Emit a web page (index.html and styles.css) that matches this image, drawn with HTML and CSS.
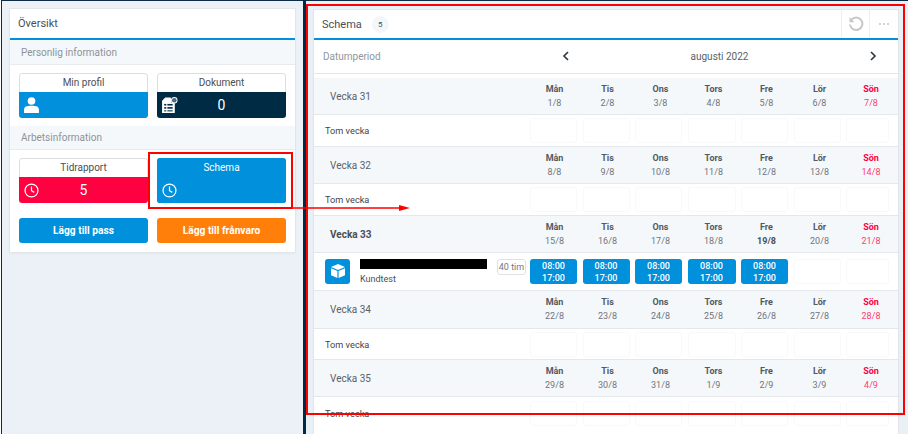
FILE: index.html
```html
<!DOCTYPE html>
<html lang="sv">
<head>
<meta charset="utf-8">
<title>Schema</title>
<link rel="stylesheet" href="styles.css">
</head>
<body>
<div class="app">
  <aside class="side">
    <section class="card overview">
      <header class="card-head"><h1>Översikt</h1></header>
      <h2 class="sec sec-first">Personlig information</h2>
      <div class="tiles">
        <div class="tile">
          <div class="tile-title">Min profil</div>
          <div class="tile-body blue">
            <svg class="ti" viewBox="0 0 16 16"><circle cx="8" cy="4.200" r="3.600" fill="#fff"/><path d="M1 15.500v-3C1 9.600 3.400 8.800 8 8.800s7 .8 7 3.700v3z" fill="#fff"/></svg>
          </div>
        </div>
        <div class="tile">
          <div class="tile-title">Dokument</div>
          <div class="tile-body navy">
            <svg class="ti" viewBox="0 0 16 16"><path d="M4 1h5l1 2v3h3v9.500H1V4z" fill="#fff"/><g fill="#002b45"><rect x="3" y="7" width="2" height="1.500"/><rect x="6" y="7" width="5" height="1.500"/><rect x="3" y="10" width="2" height="1.500"/><rect x="6" y="10" width="5" height="1.500"/><rect x="3" y="13" width="2" height="1"/><rect x="6" y="13" width="5" height="1"/></g><circle cx="12.500" cy="3.500" r="3" fill="#fff"/><circle cx="12.500" cy="3.500" r="2.200" fill="#4d6b80"/></svg>
            <span class="num">0</span>
          </div>
        </div>
      </div>
      <h2 class="sec">Arbetsinformation</h2>
      <div class="tiles">
        <div class="tile">
          <div class="tile-title">Tidrapport</div>
          <div class="tile-body red">
            <svg class="ti clock" viewBox="0 0 16 16"><circle cx="8" cy="8" r="6.900" fill="none" stroke="#fff" stroke-width="1.300"/><path d="M8 3.800v4.400l3 1.800" fill="none" stroke="#fff" stroke-width="1.300"/></svg>
            <span class="num">5</span>
          </div>
        </div>
        <div class="tile tile-solid">
          <div class="tile-title">Schema</div>
          <div class="tile-body blue">
            <svg class="ti clock" viewBox="0 0 16 16"><circle cx="8" cy="8" r="6.900" fill="none" stroke="#fff" stroke-width="1.300"/><path d="M8 3.800v4.400l3 1.800" fill="none" stroke="#fff" stroke-width="1.300"/></svg>
          </div>
        </div>
      </div>
      <div class="actions">
        <button class="btn btn-blue">Lägg till pass</button>
        <button class="btn btn-orange">Lägg till frånvaro</button>
      </div>
    </section>
  </aside>
  <div class="rule"></div>
  <main class="pane">
    <section class="card schedule">
      <header class="card-head sched-head">
        <h1>Schema</h1>
        <span class="count">5</span>
        <div class="head-tools">
          <span class="tool"><svg width="16" height="16" viewBox="0 0 16 16"><path d="M3.300 3.900A6.200 6.200 0 1 1 2 8.500" fill="none" stroke="#c8c8c8" stroke-width="2"/><path d="M1.500 1.200v5h5z" fill="#c8c8c8"/></svg></span>
          <span class="tool tool-dots"><i></i><i></i><i></i></span>
        </div>
      </header>
      <div class="period">
        <span class="period-label">Datumperiod</span>
        <svg class="chev" width="8" height="10" viewBox="0 0 8 10"><path d="M6 1 2 5l4 4" fill="none" stroke="#2f3a45" stroke-width="1.700"/></svg>
        <span class="month">augusti 2022</span>
        <svg class="chev" width="8" height="10" viewBox="0 0 8 10"><path d="M2 1l4 4-4 4" fill="none" stroke="#2f3a45" stroke-width="1.700"/></svg>
      </div>

      <div class="week first">
        <div class="wk">Vecka 31</div>
        <div class="d"><b>Mån</b><span>1/8</span></div><div class="d"><b>Tis</b><span>2/8</span></div><div class="d"><b>Ons</b><span>3/8</span></div><div class="d"><b>Tors</b><span>4/8</span></div><div class="d"><b>Fre</b><span>5/8</span></div><div class="d"><b>Lör</b><span>6/8</span></div><div class="d sun"><b>Sön</b><span>7/8</span></div>
      </div>
      <div class="row">
        <div class="empty-label">Tom vecka</div>
        <div class="cells"><i></i><i></i><i></i><i></i><i></i><i></i><i></i></div>
      </div>

      <div class="week">
        <div class="wk">Vecka 32</div>
        <div class="d"><b>Mån</b><span>8/8</span></div><div class="d"><b>Tis</b><span>9/8</span></div><div class="d"><b>Ons</b><span>10/8</span></div><div class="d"><b>Tors</b><span>11/8</span></div><div class="d"><b>Fre</b><span>12/8</span></div><div class="d"><b>Lör</b><span>13/8</span></div><div class="d sun"><b>Sön</b><span>14/8</span></div>
      </div>
      <div class="row">
        <div class="empty-label">Tom vecka</div>
        <div class="cells"><i></i><i></i><i></i><i></i><i></i><i></i><i></i></div>
      </div>

      <div class="week current">
        <div class="wk">Vecka 33</div>
        <div class="d"><b>Mån</b><span>15/8</span></div><div class="d"><b>Tis</b><span>16/8</span></div><div class="d"><b>Ons</b><span>17/8</span></div><div class="d"><b>Tors</b><span>18/8</span></div><div class="d today"><b>Fre</b><span>19/8</span></div><div class="d"><b>Lör</b><span>20/8</span></div><div class="d sun"><b>Sön</b><span>21/8</span></div>
      </div>
      <div class="row row-shift">
        <div class="person">
          <span class="box"><svg width="16" height="16" viewBox="0 0 16 16"><path d="M8 1 15 4 8 7 1 4z" fill="#fff"/><path d="M1 5.300 7.400 8v7L1 12.200zM15 5.300 8.600 8v7l6.400-2.800z" fill="#fff"/></svg></span>
          <div class="who"><div class="redact"></div><div class="cust">Kundtest</div></div>
          <span class="hours">40 tim</span>
        </div>
        <div class="cells">
          <i class="shift">08:00<br>17:00</i><i class="shift">08:00<br>17:00</i><i class="shift">08:00<br>17:00</i><i class="shift">08:00<br>17:00</i><i class="shift">08:00<br>17:00</i><i></i><i></i>
        </div>
      </div>

      <div class="week week-tall">
        <div class="wk">Vecka 34</div>
        <div class="d"><b>Mån</b><span>22/8</span></div><div class="d"><b>Tis</b><span>23/8</span></div><div class="d"><b>Ons</b><span>24/8</span></div><div class="d"><b>Tors</b><span>25/8</span></div><div class="d"><b>Fre</b><span>26/8</span></div><div class="d"><b>Lör</b><span>27/8</span></div><div class="d sun"><b>Sön</b><span>28/8</span></div>
      </div>
      <div class="row row-short">
        <div class="empty-label">Tom vecka</div>
        <div class="cells"><i></i><i></i><i></i><i></i><i></i><i></i><i></i></div>
      </div>

      <div class="week">
        <div class="wk">Vecka 35</div>
        <div class="d"><b>Mån</b><span>29/8</span></div><div class="d"><b>Tis</b><span>30/8</span></div><div class="d"><b>Ons</b><span>31/8</span></div><div class="d"><b>Tors</b><span>1/9</span></div><div class="d"><b>Fre</b><span>2/9</span></div><div class="d"><b>Lör</b><span>3/9</span></div><div class="d sun"><b>Sön</b><span>4/9</span></div>
      </div>
      <div class="row row-last">
        <div class="empty-label">Tom vecka</div>
        <div class="cells"><i></i><i></i><i></i><i></i><i></i><i></i><i></i></div>
      </div>
    </section>
  </main>
</div>

<div class="mark mark-small"></div>
<div class="mark mark-big"></div>
<svg class="arrow" width="120" height="8" viewBox="0 0 120 8"><path d="M0 4h108" stroke="#f00" stroke-width="1.600"/><path d="M107 1l11 3-11 3z" fill="#f00"/></svg>
</body>
</html>
```

FILE: styles.css
```css
* { box-sizing: border-box; }
html, body { margin: 0; padding: 0; height: 100%; }
body {
  width: 908px;
  height: 434px;
  overflow: hidden;
  position: relative;
  background: #fff;
  font-family: Roboto, "Liberation Sans", sans-serif;
  color: #4a4f55;
}
.app { display: flex; height: 434px; }
h1, h2 { margin: 0; font-weight: 400; }

.side {
  flex: 0 0 302px;
  margin-left: 1px;
  padding: 8px 0 0 8px;
  background: #ebf1f7;
  border-left: 1px solid #0b2c44;
  border-top: 1px solid #0b2c44;
}
.rule { flex: 0 0 3px; background: #002b45; }
.pane {
  flex: 0 0 602px;
  padding: 9px 0 0 8px;
  background: #e9f0f6;
  border-top: 1px solid #0b2c44;
}

.card {
  background: #fff;
  box-shadow: 0 0 0 1px #e2e6ea, 0 1px 2px #d5dde5;
}
.overview { height: 243px; width: 285px; }
.card-head {
  height: 31px;
  border-bottom: 2px solid #0090dc;
  padding-left: 8px;
  display: flex;
  align-items: center;
}
.card-head h1 { font-size: 11px; color: #4a4f55; }

.sec {
  height: 24px;
  padding-left: 11px;
  background: #f5f8fb;
  border-bottom: 1px solid #e8ecef;
  color: #8d9399;
  font-size: 10px;
  line-height: 23px;
}
.sec-first { height: 25px; line-height: 25px; }
.tiles {
  display: grid;
  grid-template-columns: 129px 129px;
  column-gap: 9px;
  padding: 8px 0 8px 9px;
}
.tile {
  height: 45px;
  border-radius: 3px;
  overflow: hidden;
  display: flex;
  flex-direction: column;
}
.tile-title {
  flex: 0 0 19px;
  border: 1px solid #dcdfe2;
  border-bottom: 0;
  border-radius: 3px 3px 0 0;
  text-align: center;
  font-size: 10px;
  line-height: 18px;
  color: #4a4f55;
}
.tile-body {
  flex: 1;
  position: relative;
  display: flex;
  align-items: center;
  justify-content: center;
  color: #fff;
}
.blue { background: #0090dc; }
.navy { background: #002b45; }
.red { background: #ff0040; }
.ti { position: absolute; left: 4px; top: 4px; width: 17px; height: 18px; }
.ti.clock { left: 5px; top: 6px; width: 15px; height: 15px; }
.num { font-size: 14px; font-weight: 400; }
.tile-solid { background: #0090dc; }
.tile-solid .tile-title { background: #0090dc; border: 0; color: #fff; line-height: 19px; }

.actions {
  display: grid;
  grid-template-columns: 129px 129px;
  column-gap: 9px;
  padding: 7px 0 0 9px;
}
.btn {
  height: 25px;
  border: 0;
  border-radius: 3px;
  color: #fff;
  font-family: inherit;
  font-size: 10.200px;
  font-weight: 700;
  padding: 0;
}
.btn-blue { background: #0090dc; }
.btn-orange { background: #ff7f0a; }

.schedule { width: 584px; height: 425px; overflow: hidden; }
.sched-head { height: 30px; padding-left: 8px; }
.count {
  flex: none;
  width: 17px;
  height: 17px;
  margin-left: 10px;
  border-radius: 50%;
  background: #f3f7fb;
  font-size: 8px;
  line-height: 17px;
  text-align: center;
  color: #4a4f55;
}
.head-tools { margin-left: auto; display: flex; height: 28px; }
.tool {
  width: 28px;
  border-left: 1px solid #eceef0;
  display: flex;
  align-items: center;
  justify-content: center;
  gap: 1.500px;
}
.tool-dots { width: 29px; }
.tool-dots i { width: 2.500px; height: 2.500px; border-radius: 50%; background: #c4c4c4; }

.period {
  height: 34px;
  padding-bottom: 1px;
  border-bottom: 1px solid #e4e6e8;
  display: grid;
  grid-template-columns: 239px 8px 299px 8px;
  align-items: center;
  padding-left: 9px;
  font-size: 10px;
}
.period-label { color: #90969c; }
.month { text-align: center; color: #5a5f64; }

.week {
  height: 37px;
  border-bottom: 1px solid #e4e8ec;
  background: #f5f8fb;
  display: grid;
  grid-template-columns: 214px repeat(6, 53px) 50px;
  align-items: center;
}
.week.first { height: 41px; border-top: 4px solid #fff; }
.week-tall { height: 38px; }
.wk { padding-left: 16px; font-size: 10px; color: #5b6066; }
.current .wk { font-weight: 700; color: #4a4f55; }
.d {
  display: flex;
  flex-direction: column;
  align-items: center;
  gap: 3px;
  font-size: 9px;
  line-height: 11px;
  color: #6f757b;
}
.d b { font-weight: 700; color: #54595f; }
.today span { font-weight: 700; color: #4a4f55; }
.sun b { color: #ff0040; }
.sun span { color: #ff3d6e; }

.row {
  height: 32px;
  display: flex;
  align-items: center;
  justify-content: space-between;
  border-bottom: 1px solid #e4e8ec;
}
.row-shift { height: 38px; }
.row-short { height: 31px; }
.row-last { border-bottom: 0; }
.empty-label { padding-left: 11px; font-size: 9.200px; color: #3f444a; }
.cells {
  display: grid;
  grid-template-columns: 47px 47px 47px 48px 47px 47px 43px;
  column-gap: 5.500px;
  width: 361px;
  margin-right: 7px;
}
.cells i {
  display: block;
  height: 25px;
  border: 1px solid #f8f9fa;
  border-radius: 3px;
}
.cells .shift {
  border: 0;
  background: #0090dc;
  color: #fff;
  font-style: normal;
  font-size: 9px;
  font-weight: 500;
  line-height: 12px;
  text-align: center;
  padding-top: .500px;
}
.person { display: flex; align-items: flex-start; padding-left: 11px; }
.box {
  width: 25px;
  height: 25px;
  border-radius: 3px;
  background: #0090dc;
  display: flex;
  align-items: center;
  justify-content: center;
}
.who { width: 137px; margin-left: 10px; }
.redact { width: 127px; height: 10px; background: #000; }
.cust { margin-top: 4px; font-size: 9px; line-height: 12px; color: #4a4f55; }
.hours {
  flex: none;
  width: 29px;
  height: 16px;
  border: 1px solid #dfe2e5;
  border-radius: 3px;
  font-size: 9px;
  line-height: 14px;
  text-align: center;
  color: #777;
}

.mark { position: absolute; border: 2px solid #f00; pointer-events: none; }
.mark-small { left: 148px; top: 152px; width: 145px; height: 57px; }
.mark-big { left: 306px; top: 4px; width: 599px; height: 411px; }
.arrow { position: absolute; left: 292px; top: 204px; }
```
